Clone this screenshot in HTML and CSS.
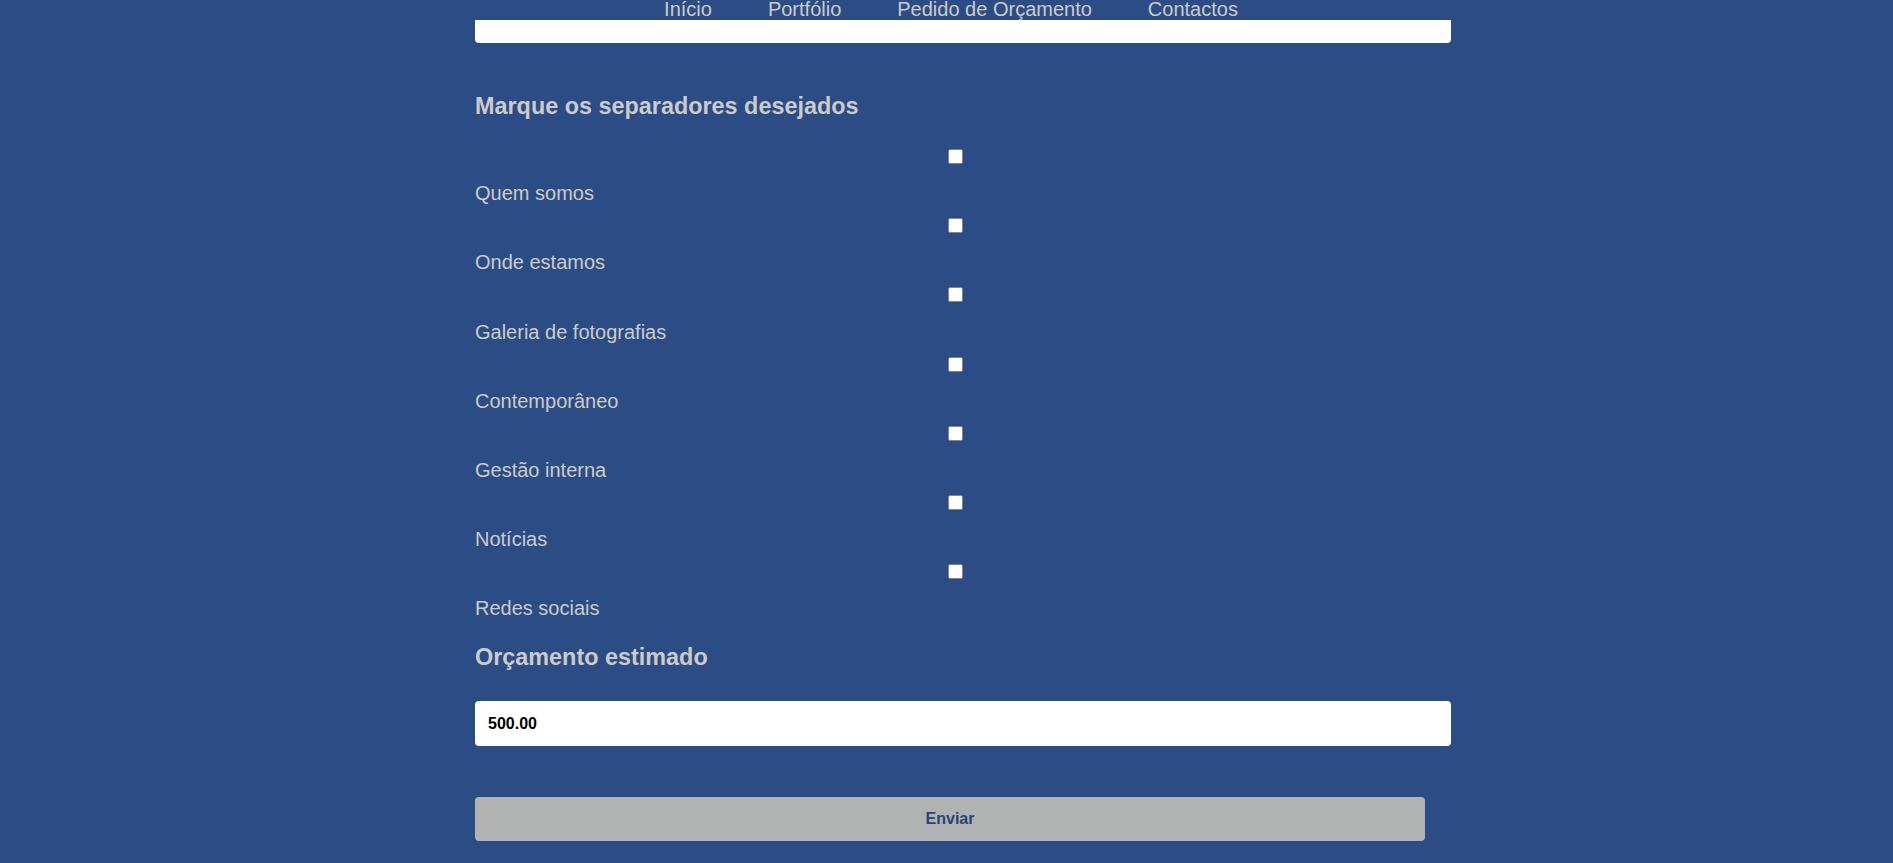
FILE: index.html
```html
<!DOCTYPE html>
<html lang="pt">
<head>
<meta charset="utf-8">
<title>Pedido de Orçamento</title>
<link rel="stylesheet" href="styles.css">
</head>
<body>
<nav class="topnav">
  <a href="#">Início</a>
  <a href="#">Portfólio</a>
  <a href="#">Pedido de Orçamento</a>
  <a href="#">Contactos</a>
</nav>
<form class="form">
  <div class="textarea-tail"></div>
  <h3 class="section-title first">Marque os separadores desejados</h3>
  <div class="options">
    <div class="option"><div class="check-wrap"><input type="checkbox" class="check" id="c1"></div><label for="c1">Quem somos</label></div>
    <div class="option"><div class="check-wrap"><input type="checkbox" class="check" id="c2"></div><label for="c2">Onde estamos</label></div>
    <div class="option"><div class="check-wrap"><input type="checkbox" class="check" id="c3"></div><label for="c3">Galeria de fotografias</label></div>
    <div class="option"><div class="check-wrap"><input type="checkbox" class="check" id="c4"></div><label for="c4">Contemporâneo</label></div>
    <div class="option"><div class="check-wrap"><input type="checkbox" class="check" id="c5"></div><label for="c5">Gestão interna</label></div>
    <div class="option"><div class="check-wrap"><input type="checkbox" class="check" id="c6"></div><label for="c6">Notícias</label></div>
    <div class="option"><div class="check-wrap"><input type="checkbox" class="check" id="c7"></div><label for="c7">Redes sociais</label></div>
  </div>
  <h3 class="section-title second">Orçamento estimado</h3>
  <input type="text" class="budget" value="500.00">
  <button type="button" class="submit">Enviar</button>
</form>
</body>
</html>
```

FILE: styles.css
```css
html, body {
  margin: 0;
  padding: 0;
}
body {
  background: #2b4c84;
  color: #cbcbcb;
  font-family: "Liberation Sans", Arial, sans-serif;
  font-size: 20px;
  overflow: hidden;
}
.topnav {
  height: 20px;
  display: flex;
  justify-content: center;
  gap: 56px;
  padding-left: 9px;
  line-height: 18px;
}
.topnav a {
  color: #cbcbcb;
  text-decoration: none;
  font-size: 20px;
}
.form {
  margin-left: 475px;
  width: 976px;
  display: flex;
  flex-direction: column;
}
.textarea-tail {
  height: 22.5px;
  background: #fff;
  border-radius: 0 0 4px 4px;
}
.section-title {
  margin: 0;
  font-size: 23.4px;
  line-height: 27px;
  font-weight: bold;
  color: #cbcbcb;
}
.section-title.first {
  margin-top: 50px;
}
.section-title.second {
  margin-top: 23.9px;
}
.options {
  display: flex;
  flex-direction: column;
  margin-top: 29.5px;
}
.option {
  display: flex;
  flex-direction: column;
  margin-bottom: 12.9px;
}
.option:last-child {
  margin-bottom: 0;
}
.check-wrap {
  display: flex;
  justify-content: center;
  padding-right: 16px;
  height: 15px;
}
.check {
  appearance: none;
  -webkit-appearance: none;
  box-sizing: border-box;
  width: 15px;
  height: 15px;
  margin: 0;
  background: #fff;
  border: 1px solid #858585;
  border-radius: 2px;
}
.option label {
  margin-top: 18.3px;
  line-height: 23px;
  font-size: 20px;
  color: #cbcbcb;
}
.budget {
  margin-top: 30px;
  height: 45px;
  box-sizing: border-box;
  border: none;
  border-radius: 4px;
  background: #fff;
  padding: 0 13px;
  font-family: "Liberation Sans", Arial, sans-serif;
  font-size: 16px;
  font-weight: bold;
  color: #000;
  outline: none;
}
.submit {
  margin-top: 51px;
  width: 950px;
  height: 44px;
  border: none;
  border-radius: 4px;
  background: #b0b3b2;
  color: #2a4372;
  font-family: "Liberation Sans", Arial, sans-serif;
  font-size: 16px;
  font-weight: bold;
}
```
